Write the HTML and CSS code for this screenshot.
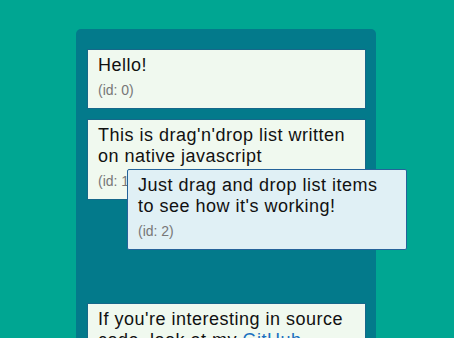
FILE: index.html
```html
<!DOCTYPE html>
<html>
<head lang="en">
    <meta charset="UTF-8">
    <title>Drag'n'drop list</title>
    <link rel="stylesheet" href="styles.css">
</head>
<body>
<div id="board">
    <ul id="list">
        <li class="item">
            <div class="title">Hello!</div>
            <div class="id">(id: 0)</div>
        </li>
        <li class="item">
            <div class="title">This is drag'n'drop list written on native javascript</div>
            <div class="id">(id: 1)</div>
        </li>
        <li class="placeholder"></li>
        <li class="item">
            <div class="title">If you're interesting in source code, look at my <a href="javascript:">GitHub</a></div>
            <div class="id">(id: 3)</div>
        </li>
    </ul>
</div>
<div class="item dragging">
    <div class="title">Just drag and drop list items to see how it's working!</div>
    <div class="id">(id: 2)</div>
</div>
</body>
</html>
```

FILE: styles.css
```css
html, body{
    margin: 0;
    padding: 0;
}
body{
    background: #00a692;
    font-family: "Liberation Sans", Arial, sans-serif;
    height: 338px;
    overflow: hidden;
}
#board{
    margin: 29px 0 0 76px;
    width: 300px;
    height: 400px;
    box-sizing: border-box;
    padding: 20px 10px 0 11px;
    background: #037a8b;
    border-radius: 5px 5px 0 0;
}
#list{
    margin: 0;
    padding: 0;
    list-style: none;
}
.item{
    background: #f0f9ef;
    border: 1px solid #16688a;
    padding: 5px 10px 10px 10px;
    margin-bottom: 10px;
}
.title{
    font-size: 18px;
    letter-spacing: 0.5px;
    color: #111;
}
.title a{
    color: #1a6fc0;
    text-decoration: none;
}
.id{
    margin-top: 6px;
    font-size: 14px;
    color: #777;
}
.placeholder{
    height: 83px;
    margin-bottom: 10px;
}
.dragging{
    position: absolute;
    left: 127px;
    top: 169px;
    width: 280px;
    box-sizing: border-box;
    padding-right: 16px;
    margin: 0;
    background: #e0f0f5;
    border-color: #25639a;
    border-radius: 2px;
}
```
